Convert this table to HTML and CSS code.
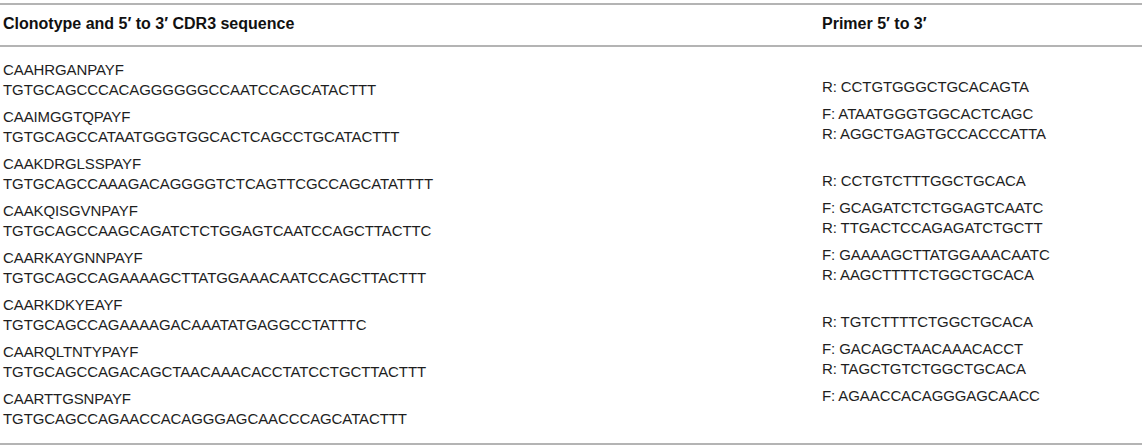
FILE: index.html
```html
<!DOCTYPE html>
<html lang="en">
<head>
<meta charset="utf-8">
<title>Clonotype primers</title>
<link rel="stylesheet" href="styles.css">
</head>
<body>
<table class="tbl">
  <thead>
    <tr>
      <th class="c-seq">Clonotype and 5′ to 3′ CDR3 sequence</th>
      <th class="c-pri">Primer 5′ to 3′</th>
    </tr>
  </thead>
  <tbody>
    <tr>
      <td class="c-seq"><div class="ln">CAAHRGANPAYF</div><div class="ln">TGTGCAGCCCACAGGGGGGCCAATCCAGCATACTTT</div></td>
      <td class="c-pri"><div class="ln"></div><div class="ln">R: CCTGTGGGCTGCACAGTA</div></td>
    </tr>
    <tr>
      <td class="c-seq"><div class="ln">CAAIMGGTQPAYF</div><div class="ln">TGTGCAGCCATAATGGGTGGCACTCAGCCTGCATACTTT</div></td>
      <td class="c-pri"><div class="ln">F: ATAATGGGTGGCACTCAGC</div><div class="ln">R: AGGCTGAGTGCCACCCATTA</div></td>
    </tr>
    <tr>
      <td class="c-seq"><div class="ln">CAAKDRGLSSPAYF</div><div class="ln">TGTGCAGCCAAAGACAGGGGTCTCAGTTCGCCAGCATATTTT</div></td>
      <td class="c-pri"><div class="ln"></div><div class="ln">R: CCTGTCTTTGGCTGCACA</div></td>
    </tr>
    <tr>
      <td class="c-seq"><div class="ln">CAAKQISGVNPAYF</div><div class="ln">TGTGCAGCCAAGCAGATCTCTGGAGTCAATCCAGCTTACTTC</div></td>
      <td class="c-pri"><div class="ln">F: GCAGATCTCTGGAGTCAATC</div><div class="ln">R: TTGACTCCAGAGATCTGCTT</div></td>
    </tr>
    <tr>
      <td class="c-seq"><div class="ln">CAARKAYGNNPAYF</div><div class="ln">TGTGCAGCCAGAAAAGCTTATGGAAACAATCCAGCTTACTTT</div></td>
      <td class="c-pri"><div class="ln">F: GAAAAGCTTATGGAAACAATC</div><div class="ln">R: AAGCTTTTCTGGCTGCACA</div></td>
    </tr>
    <tr>
      <td class="c-seq"><div class="ln">CAARKDKYEAYF</div><div class="ln">TGTGCAGCCAGAAAAGACAAATATGAGGCCTATTTC</div></td>
      <td class="c-pri"><div class="ln"></div><div class="ln">R: TGTCTTTTCTGGCTGCACA</div></td>
    </tr>
    <tr>
      <td class="c-seq"><div class="ln">CAARQLTNTYPAYF</div><div class="ln">TGTGCAGCCAGACAGCTAACAAACACCTATCCTGCTTACTTT</div></td>
      <td class="c-pri"><div class="ln">F: GACAGCTAACAAACACCT</div><div class="ln">R: TAGCTGTCTGGCTGCACA</div></td>
    </tr>
    <tr>
      <td class="c-seq"><div class="ln">CAARTTGSNPAYF</div><div class="ln">TGTGCAGCCAGAACCACAGGGAGCAACCCAGCATACTTT</div></td>
      <td class="c-pri"><div class="ln">F: AGAACCACAGGGAGCAACC</div><div class="ln"></div></td>
    </tr>
  </tbody>
</table>
</body>
</html>
```

FILE: styles.css
```css
html, body {
  margin: 0;
  padding: 0;
  background: #ffffff;
}
body {
  padding-top: 3px;
  font-family: "Liberation Sans", Arial, Helvetica, sans-serif;
  color: #1e1e1e;
}
.tbl {
  width: 1142px;
  border-collapse: collapse;
  border-top: 2px solid #b4b4b4;
  border-bottom: 2px solid #b4b4b4;
}
.tbl th {
  text-align: left;
  font-weight: bold;
  font-size: 16px;
  line-height: 20px;
  padding: 9px 0 11px 3px;
  border-bottom: 2px solid #b4b4b4;
  color: #111;
}
.tbl th.c-seq {
  width: 816px;
}
.tbl td {
  vertical-align: top;
  font-size: 15px;
  line-height: 20px;
  letter-spacing: -0.1px;
  padding: 4px 0 3px 3px;
}
.tbl td.c-pri {
  padding-top: 1px;
  padding-bottom: 6px;
}
.tbl tbody tr:first-child td.c-seq {
  padding-top: 13px;
}
.tbl tbody tr:first-child td.c-pri {
  padding-top: 10px;
}
.tbl tbody tr:last-child td {
  padding-bottom: 14px;
}
.ln {
  height: 20px;
  white-space: nowrap;
}
```
